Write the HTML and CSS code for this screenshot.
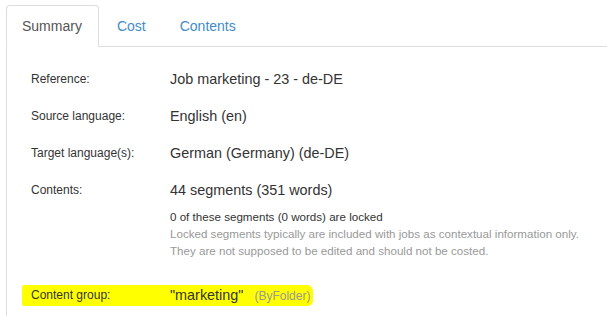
FILE: index.html
```html
<!DOCTYPE html>
<html lang="en">
<head>
  <meta charset="UTF-8">
  <title>Job summary</title>
  <link rel="stylesheet" href="styles.css">
</head>
<body>
  <ul class="nav-tabs">
    <li class="active"><a href="#">Summary</a></li>
    <li><a href="#">Cost</a></li>
    <li><a href="#">Contents</a></li>
  </ul>
  <div class="tab-content">
    <div class="row">
      <div class="label">Reference:</div>
      <div class="value">Job marketing - 23 - de-DE</div>
    </div>
    <div class="row">
      <div class="label">Source language:</div>
      <div class="value">English (en)</div>
    </div>
    <div class="row">
      <div class="label">Target language(s):</div>
      <div class="value">German (Germany) (de-DE)</div>
    </div>
    <div class="row">
      <div class="label">Contents:</div>
      <div class="value">
        44 segments (351 words)
        <div class="locked">
          <p>0 of these segments (0 words) are locked</p>
          <p class="muted">Locked segments typically are included with jobs as contextual information only.</p>
          <p class="muted">They are not supposed to be edited and should not be costed.</p>
        </div>
      </div>
    </div>
    <div class="row marked">
      <div class="label">Content group:</div>
      <div class="value">"marketing" <span class="muted small">(ByFolder)</span></div>
    </div>
  </div>
</body>
</html>
```

FILE: styles.css
```css
* {
  margin: 0;
  padding: 0;
  box-sizing: border-box;
}
html, body {
  height: 100%;
  overflow: hidden;
}
body {
  font-family: 'Liberation Sans', Arial, sans-serif;
  color: #333;
  background: #fff;
  padding: 5px 0 0 6px;
  display: flex;
  flex-direction: column;
}
.nav-tabs {
  list-style: none;
  display: flex;
  border-bottom: 1px solid #ddd;
}
.nav-tabs li {
  margin-bottom: -1px;
  margin-right: 2px;
}
.nav-tabs a {
  display: block;
  padding: 10px 15px;
  line-height: 20px;
  font-size: 14px;
  color: #428bca;
  text-decoration: none;
  border: 1px solid transparent;
  border-radius: 4px 4px 0 0;
}
.nav-tabs .active a {
  color: #555;
  background: #fff;
  border-color: #ddd #ddd transparent;
  padding-right: 16px;
}
.tab-content {
  flex: 1;
  border-left: 1px solid #ddd;
  padding: 22px 0 0 24px;
}
.row {
  display: flex;
  margin-bottom: 17px;
}
.label {
  width: 139px;
  flex-shrink: 0;
  font-size: 12px;
  line-height: 20px;
}
.value {
  font-size: 14.4px;
  line-height: 20px;
}
.locked {
  margin-top: 8px;
  font-size: 11.6px;
  line-height: 17px;
}
.muted {
  color: #999;
}
.small {
  font-size: 12px;
  margin-left: 7px;
}
.row.marked {
  margin-top: 26px;
  margin-left: -9px;
  padding: 0 3px 0 9px;
  width: fit-content;
  background: #ffff00;
  border-radius: 2px 6px 5px 2px;
}
```
